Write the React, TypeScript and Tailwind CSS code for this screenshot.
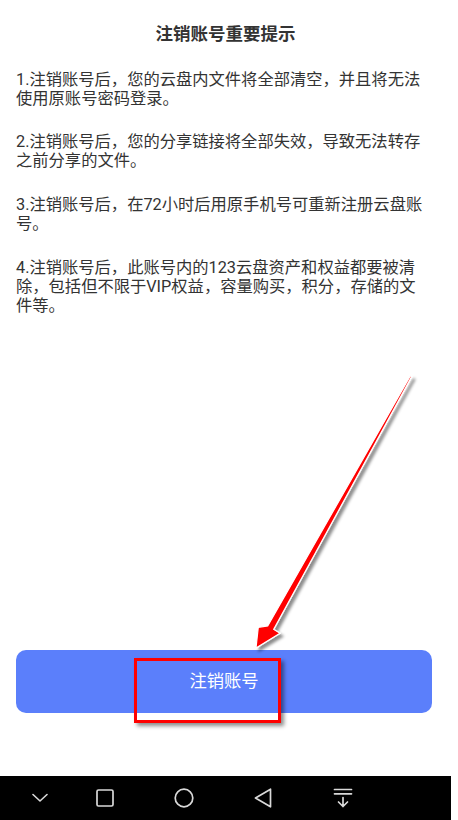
import React from 'react'

const paragraphs = [
  '1.注销账号后，您的云盘内文件将全部清空，并且将无法使用原账号密码登录。',
  '2.注销账号后，您的分享链接将全部失效，导致无法转存之前分享的文件。',
  '3.注销账号后，在72小时后用原手机号可重新注册云盘账号。',
  '4.注销账号后，此账号内的123云盘资产和权益都要被清除，包括但不限于VIP权益，容量购买，积分，存储的文件等。',
]

function NavBar() {
  const stroke = '#d9d9d9'
  return (
    <div className="flex h-[44px] w-[451px] items-center bg-black">
      {/* down chevron */}
      <svg width="16" height="10" viewBox="0 0 16 10" className="ml-[32px]">
        <path d="M1 1.5 L8 8 L15 1.5" fill="none" stroke={stroke} strokeWidth="1.6" strokeLinecap="round" strokeLinejoin="round" />
      </svg>
      {/* square */}
      <svg width="18" height="18" viewBox="0 0 18 18" className="ml-[48px]">
        <rect x="1" y="1" width="16" height="16" rx="1.5" fill="none" stroke={stroke} strokeWidth="1.7" />
      </svg>
      {/* circle */}
      <svg width="20" height="20" viewBox="0 0 20 20" className="ml-[60px]">
        <circle cx="10" cy="10" r="8.8" fill="none" stroke={stroke} strokeWidth="1.7" />
      </svg>
      {/* back triangle */}
      <svg width="18" height="20" viewBox="0 0 18 20" className="ml-[60px]">
        <path d="M16.5 1.2 L1.5 10 L16.5 18.8 Z" fill="none" stroke={stroke} strokeWidth="1.7" strokeLinejoin="round" />
      </svg>
      {/* notification pull-down */}
      <svg width="20" height="20" viewBox="0 0 20 20" className="ml-[61px]">
        <path d="M1.5 1.5 H18.5 M1.5 5.8 H18.5 M10 9.5 V18.5 M5.5 14 L10 18.5 L14.5 14" fill="none" stroke={stroke} strokeWidth="1.7" strokeLinecap="round" strokeLinejoin="round" />
      </svg>
    </div>
  )
}

function RedArrow() {
  return (
    <svg
      className="pointer-events-none absolute left-0 top-0"
      width="458"
      height="820"
      viewBox="0 0 458 820"
    >
      <defs>
        <filter id="arrowShadow" x="-20%" y="-20%" width="140%" height="140%">
          <feDropShadow dx="3" dy="3" stdDeviation="1.6" floodColor="#000" floodOpacity="0.45" />
        </filter>
      </defs>
      <polygon
        points="256,648 258.3,627.3 267.7,626 410.4,375.7 411.8,376.4 273.7,629.4 280,633.3"
        fill="#ff0000"
        stroke="#ffffff"
        strokeWidth="1.2"
        strokeLinejoin="miter"
        filter="url(#arrowShadow)"
      />
    </svg>
  )
}

export default function App() {
  return (
    <div
      className="relative h-[820px] w-[458px] overflow-hidden bg-white"
      style={{ fontFamily: 'Roboto, "Noto Sans CJK SC", sans-serif' }}
    >
      <div className="flex h-[776px] w-[451px] flex-col">
        <h1 className="mt-[21.5px] text-center text-[17.5px] font-bold leading-[24px] text-[#333333]">
          注销账号重要提示
        </h1>

        <div className="mt-[24px] flex flex-col gap-[24.7px] pl-4 pr-[24px]">
          {paragraphs.map((p) => (
            <p key={p} className="text-[16.3px] leading-[19px] text-[#333333]">
              {p}
            </p>
          ))}
        </div>

        <button className="mb-[63px] ml-4 mt-auto flex h-[63px] w-[416px] items-center justify-center rounded-[10px] bg-[#5b7ffb] text-[17.3px] text-white">
          注销账号
        </button>
      </div>

      <NavBar />

      {/* annotation box */}
      <div className="pointer-events-none absolute left-[134px] top-[658px] h-[65px] w-[147px] border-[3px] border-[#ff0000] shadow-[3px_3px_4px_rgba(0,0,0,0.45)]" />
      <RedArrow />
    </div>
  )
}
